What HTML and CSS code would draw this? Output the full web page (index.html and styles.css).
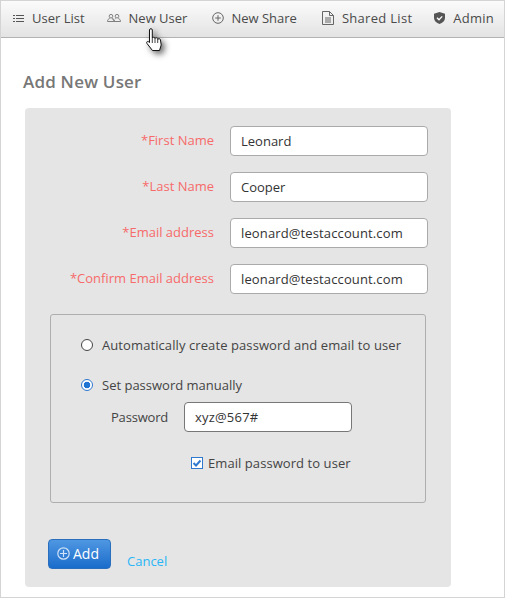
FILE: index.html
```html
<!DOCTYPE html>
<html lang="en">
<head>
<meta charset="utf-8">
<title>Add New User</title>
<link rel="stylesheet" href="styles.css">
</head>
<body>
<div class="frame">
  <nav class="nav">
    <a class="nav-item item-list">
      <svg class="ico" width="11" height="7" viewBox="0 0 11 7" fill="none" stroke="#555" stroke-width="1"><path d="M0 .5h2M3 .5h8M0 3.500h2M3 3.500h8M0 6.500h2M3 6.500h8"/></svg>
      <span>User List</span>
    </a>
    <a class="nav-item item-user">
      <svg class="ico" width="14" height="8" viewBox="0 0 14 8" fill="none" stroke="#808080" stroke-width="1"><circle cx="4" cy="2.200" r="1.800"/><circle cx="10" cy="2.200" r="1.800"/><path d="M.5 7.500c0-2 1-2.500 2.200-3M5.300 4.500c1.200.5 2.200 1 2.200 3zM.5 7.500h7M6.500 7.500h7c0-2-1-2.500-2.200-3M8.700 4.500l-.8.4"/></svg>
      <span>New User</span>
    </a>
    <a class="nav-item item-share">
      <svg class="ico" width="12" height="12" viewBox="0 0 12 12" fill="none" stroke="#666" stroke-width="1"><circle cx="6" cy="6" r="5.300"/><path d="M6 3.200v5.600M3.200 6h5.600"/></svg>
      <span>New Share</span>
    </a>
    <a class="nav-item item-shared">
      <svg class="ico" width="12" height="14" viewBox="0 0 12 14" fill="none" stroke="#666" stroke-width="1"><path d="M.5.500h7l4 4v9H.5zM7.500.500v4h4M3 7h6M3 9h6M3 11h6"/></svg>
      <span>Shared List</span>
    </a>
    <a class="nav-item item-admin">
      <svg class="ico" width="11" height="12" viewBox="0 0 11 12"><path fill="#555" d="M5.500 0 11 1.800V6c0 3-2.500 5-5.500 6C2.500 11 0 9 0 6V1.800z"/><path fill="none" stroke="#fff" stroke-width="1.300" d="M3 5.800l2 2 3.200-3.400"/></svg>
      <span>Admin</span>
    </a>
  </nav>

  <svg class="cursor" width="20" height="25" viewBox="0 0 20 25">
    <path fill="#fff" stroke="#111" stroke-width="1" stroke-linejoin="round" d="M3.500 2c0-1.800 2.800-1.800 2.800 0v8c0-1 2.700-1 2.700 0v.5c0-1 2.700-1 2.700 0v1c0-1 2.700-1 2.700 0l.8 5.500-1.700 5.500H6.500L1 15.500c-1-1.500.5-3 2.500-1z"/>
    <path fill="none" stroke="#111" stroke-width=".8" d="M6.300 10v5M9 10.500V15M11.700 11.500V15"/>
  </svg>

  <main class="content">
    <h1 class="title">Add New User</h1>
    <form class="panel">
      <div class="row">
        <label class="req">*First Name</label>
        <div class="field">Leonard</div>
      </div>
      <div class="row">
        <label class="req">*Last Name</label>
        <div class="field">Cooper</div>
      </div>
      <div class="row">
        <label class="req">*Email address</label>
        <div class="field field-mail">leonard@testaccount.com</div>
      </div>
      <div class="row">
        <label class="req">*Confirm Email address</label>
        <div class="field field-mail">leonard@testaccount.com</div>
      </div>

      <fieldset class="box">
        <div class="option option-auto">
          <span class="radio"></span>
          <span>Automatically create password and email to user</span>
        </div>
        <div class="option option-manual">
          <span class="radio radio-on"></span>
          <span>Set password manually</span>
        </div>
        <div class="pw-row">
          <span class="pw-label">Password</span>
          <div class="field field-pw">xyz@567#</div>
        </div>
        <div class="check-row">
          <span class="check">
            <svg width="12" height="12" viewBox="0 0 12 12"><path fill="none" stroke="#2f78d0" stroke-width="2" d="M2.500 6l2.500 2.500 4.500-5"/></svg>
          </span>
          <span>Email password to user</span>
        </div>
      </fieldset>

      <div class="actions">
        <button class="btn" type="button">
          <svg width="13" height="13" viewBox="0 0 13 13" fill="none" stroke="#cfe2f7" stroke-width="1.200"><circle cx="6.500" cy="6.500" r="5.700"/><path d="M6.500 3v7M3 6.500h7"/></svg>
          <span>Add</span>
        </button>
        <a class="cancel">Cancel</a>
      </div>
    </form>
  </main>
</div>
</body>
</html>
```
FILE: styles.css
```css
* { box-sizing: border-box; }
html, body { margin: 0; padding: 0; }
body {
  width: 505px;
  height: 598px;
  background: #fff;
  font-family: "Open Sans", "Noto Sans", sans-serif;
  font-size: 13px;
  color: #444;
  overflow: hidden;
}
.frame {
  position: relative;
  width: 505px;
  height: 598px;
  border: 1px solid #d4d4d4;
  background: #fff;
}
.nav {
  display: flex;
  align-items: center;
  height: 37px;
  padding: 0 0 2px 12px;
  background: linear-gradient(#fbfbfb, #e3e3e3);
  border-bottom: 1px solid #b2b2b2;
  white-space: nowrap;
  color: #4a4a4a;
}
.nav-item { display: flex; align-items: center; }
.ico { flex: none; }
.item-list .ico { margin-right: 8px; }
.item-user { margin-left: 22px; }
.item-user .ico { margin-right: 8px; }
.item-share { margin-left: 25px; }
.item-share .ico { margin-right: 7px; }
.item-shared { margin-left: 25px; letter-spacing: .3px; }
.item-shared .ico { margin-right: 8px; }
.item-admin { margin-left: 22px; letter-spacing: .2px; }
.item-admin .ico { margin-right: 8px; }

.cursor {
  position: absolute;
  left: 145px;
  top: 27px;
  filter: drop-shadow(3px 3px 3px rgba(0, 0, 0, .6));
}

.content { padding: 0 0 0 22px; }
.title {
  margin: 0;
  padding-top: 33px;
  height: 70px;
  font-size: 17px;
  line-height: 22px;
  font-weight: 600;
  letter-spacing: .2px;
  color: #777;
}
.panel {
  width: 426px;
  height: 479px;
  margin-left: 2px;
  padding: 18px 0 0 25px;
  background: #e5e5e5;
  border-radius: 4px;
}
.row {
  display: grid;
  grid-template-columns: 164px 198px;
  column-gap: 16px;
  margin: 0 0 16px 0;
  height: 30px;
}
.req {
  justify-self: end;
  align-self: center;
  position: relative;
  top: -1px;
  color: #f76a6a;
  white-space: nowrap;
}
.field {
  display: flex;
  align-items: center;
  height: 30px;
  padding-left: 10px;
  background: #fff;
  border: 1px solid #aaa;
  border-radius: 4px;
  color: #333;
}
.field-mail { letter-spacing: .13px; }
.box {
  width: 376px;
  height: 189px;
  margin: 20px 0 0 0;
  padding: 0;
  border: 1px solid #aeaeae;
  border-radius: 3px;
  min-inline-size: 0;
}
.option { display: flex; align-items: center; height: 20px; margin-left: 30px; }
.option-auto { margin-top: 20px; letter-spacing: .09px; }
.option-manual { margin-top: 20px; }
.radio {
  width: 12px;
  height: 12px;
  margin-right: 9px;
  border: 1px solid #444;
  border-radius: 50%;
  background: #fff;
  flex: none;
}
.radio-on {
  border-color: #2f78d0;
  background: radial-gradient(circle, #1f74d4 0 3px, #fff 3.600px);
}
.pw-row { display: flex; align-items: center; margin: 7px 0 0 60px; }
.pw-label { width: 73px; letter-spacing: -.2px; }
.field-pw { width: 168px; border-color: #777; letter-spacing: .2px; }
.check-row { display: flex; align-items: center; height: 20px; margin: 21px 0 0 140px; letter-spacing: .07px; }
.check {
  display: flex;
  width: 12px;
  height: 12px;
  margin-right: 5px;
  border: 1px solid #2f78d0;
  background: #fff;
  flex: none;
}
.check svg { margin: -1px; }
.actions { display: flex; align-items: flex-start; margin: 36px 0 0 -2px; }
.btn {
  display: flex;
  align-items: center;
  gap: 3px;
  width: 63px;
  height: 30px;
  padding: 0 0 2px 8px;
  font-family: inherit;
  font-size: 14px;
  color: #fff;
  background: linear-gradient(#4f97e2, #1a6ccb);
  border: 1px solid #2a6fbe;
  border-radius: 4px;
}
.cancel { margin: 13px 0 0 16px; color: #29b6f6; line-height: 18px; }
```
